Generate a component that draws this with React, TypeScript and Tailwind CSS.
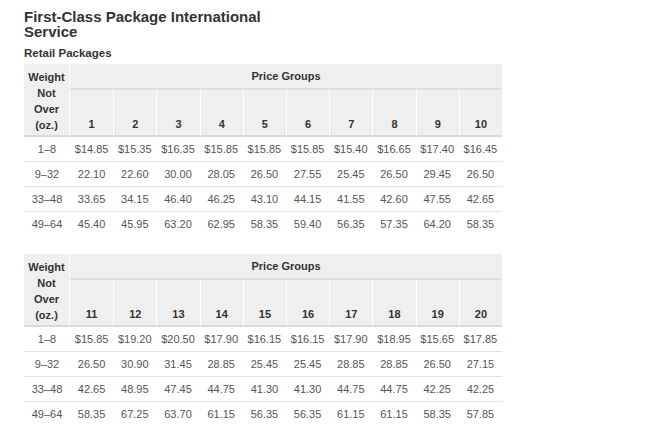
import React from "react";

type Row = { w: string; v: string[] };

const table1: Row[] = [
  { w: "1–8", v: ["$14.85", "$15.35", "$16.35", "$15.85", "$15.85", "$15.85", "$15.40", "$16.65", "$17.40", "$16.45"] },
  { w: "9–32", v: ["22.10", "22.60", "30.00", "28.05", "26.50", "27.55", "25.45", "26.50", "29.45", "26.50"] },
  { w: "33–48", v: ["33.65", "34.15", "46.40", "46.25", "43.10", "44.15", "41.55", "42.60", "47.55", "42.65"] },
  { w: "49–64", v: ["45.40", "45.95", "63.20", "62.95", "58.35", "59.40", "56.35", "57.35", "64.20", "58.35"] },
];

const table2: Row[] = [
  { w: "1–8", v: ["$15.85", "$19.20", "$20.50", "$17.90", "$16.15", "$16.15", "$17.90", "$18.95", "$15.65", "$17.85"] },
  { w: "9–32", v: ["26.50", "30.90", "31.45", "28.85", "25.45", "25.45", "28.85", "28.85", "26.50", "27.15"] },
  { w: "33–48", v: ["42.65", "48.95", "47.45", "44.75", "41.30", "41.30", "44.75", "44.75", "42.25", "42.25"] },
  { w: "49–64", v: ["58.35", "67.25", "63.70", "61.15", "56.35", "56.35", "61.15", "61.15", "58.35", "57.85"] },
];

function PriceTable({ groups, rows }: { groups: number[]; rows: Row[] }) {
  return (
    <div className="grid w-[478px] grid-cols-[46px_repeat(10,minmax(0,1fr))] grid-rows-[26px_47px_repeat(4,25px)] text-[11px]">
      <div className="row-span-2 flex flex-col items-center bg-[#efefef] border-r border-white border-b-2 border-b-[#d9d9d9] pt-[5px] pb-[2px] font-bold leading-[16px] text-[#333]">
        <span>Weight</span>
        <span>Not</span>
        <span>Over</span>
        <span>(oz.)</span>
      </div>
      <div className="col-span-10 flex items-center justify-center bg-[#efefef] border-b-2 border-[#e0e0e0] pt-[1px] font-bold text-[#333]">
        Price Groups
      </div>
      {groups.map((g, i) => (
        <div
          key={g}
          className={
            "flex items-end justify-center bg-[#efefef] border-b-2 border-b-[#d9d9d9] pb-[3px] font-bold text-[#333] leading-[16px] " +
            (i === 0 ? "" : "border-l border-l-white")
          }
        >
          {g}
        </div>
      ))}
      {rows.map((r, ri) => {
        const last = ri === rows.length - 1;
        const cls =
          "flex items-center justify-center text-[#555] " +
          (last ? "" : "border-b border-[#e2e2e2]");
        return (
          <React.Fragment key={r.w}>
            <div className={cls}>{r.w}</div>
            {r.v.map((v, ci) => (
              <div key={ci} className={cls}>
                {v}
              </div>
            ))}
          </React.Fragment>
        );
      })}
    </div>
  );
}

export default function App() {
  return (
    <div
      className="min-h-[437px] w-[650px] bg-white pl-[24px] pt-[9px]"
      style={{ fontFamily: '"Liberation Sans", Arial, sans-serif' }}
    >
      <h1 className="w-[260px] text-[15px] font-bold leading-[15px] text-[#333]">
        First-Class Package International Service
      </h1>
      <h2 className="mt-[7px] mb-[4px] text-[11.5px] font-bold leading-[14px] text-[#333]">
        Retail Packages
      </h2>
      <PriceTable groups={[1, 2, 3, 4, 5, 6, 7, 8, 9, 10]} rows={table1} />
      <div className="h-[17px]" />
      <PriceTable groups={[11, 12, 13, 14, 15, 16, 17, 18, 19, 20]} rows={table2} />
    </div>
  );
}
